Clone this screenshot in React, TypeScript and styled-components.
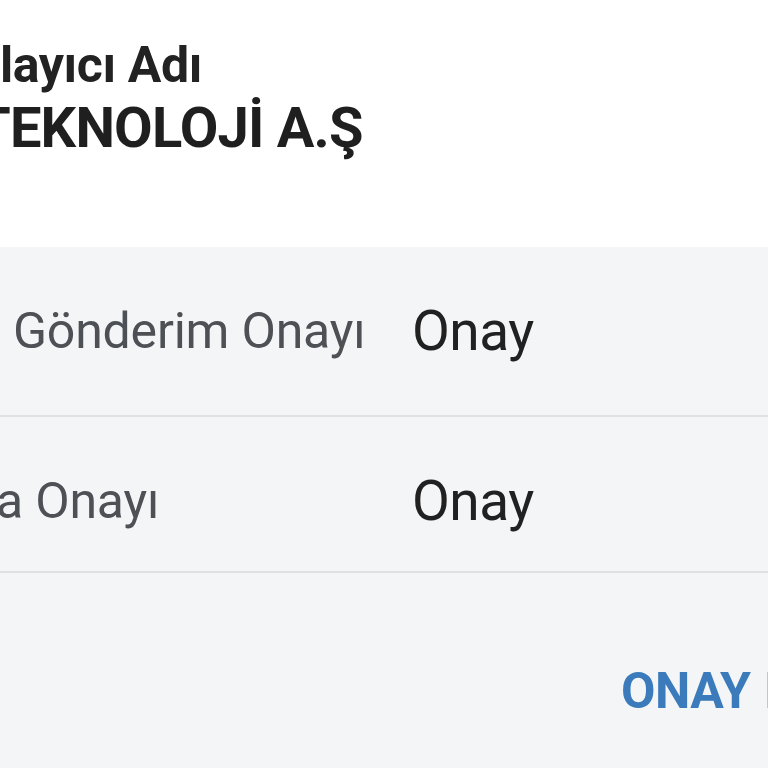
import React from "react";
import styled, { createGlobalStyle } from "styled-components";

const Global = createGlobalStyle`
  html, body { margin: 0; padding: 0; background: #ffffff; }
  body { width: 768px; height: 768px; overflow: hidden; font-family: Roboto, "Noto Sans", Arial, sans-serif; }
`;

const Page = styled.div`
  width: 768px;
  height: 768px;
  overflow: hidden;
  display: flex;
  flex-direction: column;
`;

const Header = styled.header`
  height: 247px;
  box-sizing: border-box;
  padding-top: 34px;
  display: flex;
  flex-direction: column;
  background: #ffffff;
`;

const Caption = styled.div<{ $shift: number }>`
  margin-left: ${(p) => p.$shift}px;
  font-size: 50px;
  line-height: 62px;
  font-weight: 700;
  color: #222222;
  white-space: nowrap;
  letter-spacing: -0.4px;
`;

const Title = styled.div<{ $shift: number }>`
  margin-left: ${(p) => p.$shift}px;
  font-size: 56px;
  line-height: 64px;
  font-weight: 700;
  color: #1f1f1f;
  white-space: nowrap;
  letter-spacing: -0.8px;
`;

const Panel = styled.section`
  flex: 1;
  background: #f4f5f7;
  display: flex;
  flex-direction: column;
`;

const Row = styled.div<{ $h: number; $pad: number }>`
  height: ${(p) => p.$h}px;
  box-sizing: border-box;
  padding-top: ${(p) => p.$pad}px;
  border-bottom: 2px solid #dfe0e3;
  display: grid;
  grid-template-columns: 412px 1fr;
  align-items: center;
`;

const Label = styled.span<{ $shift: number }>`
  margin-left: ${(p) => p.$shift}px;
  font-size: 50px;
  font-weight: 400;
  color: #4d5054;
  white-space: nowrap;
  letter-spacing: -0.2px;
`;

const Value = styled.span`
  font-size: 55px;
  font-weight: 400;
  color: #212121;
  white-space: nowrap;
  letter-spacing: -0.5px;
`;

const Actions = styled.div`
  display: flex;
  justify-content: flex-start;
  padding-top: 88px;
  padding-left: 621px;
  gap: 14px;
`;

const ActionButton = styled.button`
  border: none;
  background: transparent;
  padding: 0;
  font-family: inherit;
  font-size: 50px;
  line-height: 60px;
  font-weight: 700;
  color: #3b7bbb;
  white-space: nowrap;
  letter-spacing: -0.5px;
  cursor: pointer;
`;

export default function App() {
  return (
    <>
      <Global />
      <Page>
        <Header>
          <Caption $shift={0}>layıcı Adı</Caption>
          <Title $shift={-24}>TEKNOLOJİ A.Ş</Title>
        </Header>
        <Panel>
          <Row $h={170} $pad={0}>
            <Label $shift={13}>Gönderim Onayı</Label>
            <Value>Onay</Value>
          </Row>
          <Row $h={156} $pad={14}>
            <Label $shift={-4}>a Onayı</Label>
            <Value>Onay</Value>
          </Row>
          <Actions>
            <ActionButton>ONAY</ActionButton>
            <ActionButton>EKLE</ActionButton>
          </Actions>
        </Panel>
      </Page>
    </>
  );
}
